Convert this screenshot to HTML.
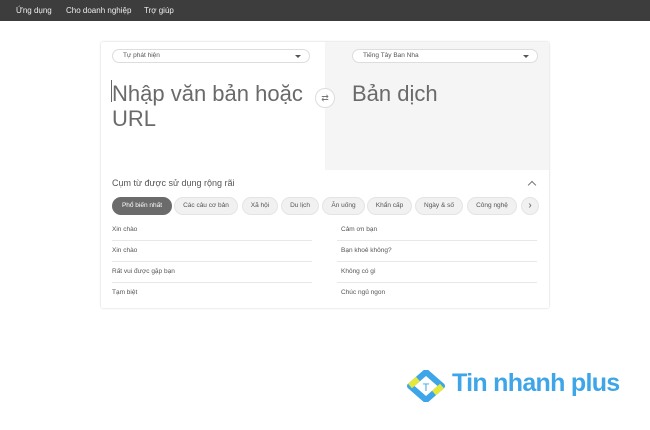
<html><head><style>
body{margin:0;width:650px;height:430px;background:#fff;font-family:"Liberation Sans",sans-serif;position:relative;overflow:hidden}
.nav{position:absolute;left:0;top:0;width:650px;height:21px;background:#3d3d3d;color:#eee;font-size:8px}
.nav span{position:absolute;top:6px}
.card{position:absolute;left:101px;top:42px;width:448px;height:266px;background:#fff;box-shadow:0 0 2px rgba(0,0,0,.2);border-radius:2px}
.right{position:absolute;left:224px;top:0;width:224px;height:128px;background:#f5f5f5}
.sel{position:absolute;top:7px;height:12px;border:1px solid #ddd;border-radius:8px;background:#fff;font-size:6.5px;color:#555;line-height:12px;padding-left:10px;box-sizing:content-box}
.sel:after{content:"";position:absolute;right:8px;top:5px;border:3px solid transparent;border-top:3px solid #555}
.big{position:absolute;font-size:22px;color:#6a6a6a;line-height:25px}
.sw{position:absolute;left:214px;top:46px;width:18px;height:18px;border-radius:50%;background:#fff;border:1px solid #ddd;font-size:9px;color:#777;text-align:center;line-height:18px}
.chip{position:absolute;top:155px;height:16px;border:1px solid #e4e4e4;border-radius:9px;background:#f1f1f1;font-size:6.5px;color:#555;line-height:16px;text-align:center}
.it{position:absolute;font-size:6.5px;color:#555}
.ln{position:absolute;height:1px;background:#e8e8e8}
</style></head><body>
<div class="nav"><span style="left:16px">Ứng dụng</span><span style="left:66px">Cho doanh nghiệp</span><span style="left:144px">Trợ giúp</span></div>
<div class="card">
<div class="right"></div>
<div class="sel" style="left:11px;width:186px">Tự phát hiện</div>
<div class="sel" style="left:251px;width:174px">Tiếng Tây Ban Nha</div>
<div style="position:absolute;left:10px;top:38px;width:1px;height:22px;background:#666"></div>
<div class="big" style="left:11px;top:39px">Nhập văn bản hoặc<br>URL</div>
<div class="big" style="left:251px;top:39px">Bản dịch</div>
<div class="sw">⇄</div>
<div style="position:absolute;left:11px;top:136px;font-size:9px;color:#555">Cụm từ được sử dụng rộng rãi</div>
<div style="position:absolute;left:428px;top:140px;width:5px;height:5px;border-left:1px solid #777;border-top:1px solid #777;transform:rotate(45deg)"></div>
<div class="chip" style="left:11px;width:58px;background:#6b6b6b;color:#fff;border-color:#6b6b6b">Phổ biến nhất</div>
<div class="chip" style="left:73px;width:62px">Các câu cơ bản</div>
<div class="chip" style="left:141px;width:34px">Xã hội</div>
<div class="chip" style="left:180px;width:36px">Du lịch</div>
<div class="chip" style="left:221px;width:41px">Ăn uống</div>
<div class="chip" style="left:266px;width:43px">Khẩn cấp</div>
<div class="chip" style="left:314px;width:46px">Ngày &amp; số</div>
<div class="chip" style="left:366px;width:48px">Công nghệ</div>
<div class="chip" style="left:420px;width:16px;font-size:10px">›</div>
<div class="it" style="left:11px;top:184px">Xin chào</div><div class="it" style="left:240px;top:184px">Cảm ơn bạn</div>
<div class="it" style="left:11px;top:205px">Xin chào</div><div class="it" style="left:240px;top:205px">Bạn khoẻ không?</div>
<div class="it" style="left:11px;top:226px">Rất vui được gặp bạn</div><div class="it" style="left:240px;top:226px">Không có gì</div>
<div class="it" style="left:11px;top:247px">Tạm biệt</div><div class="it" style="left:240px;top:247px">Chúc ngủ ngon</div>
<div class="ln" style="left:11px;top:198px;width:200px"></div><div class="ln" style="left:236px;top:198px;width:200px"></div>
<div class="ln" style="left:11px;top:219px;width:200px"></div><div class="ln" style="left:236px;top:219px;width:200px"></div>
<div class="ln" style="left:11px;top:240px;width:200px"></div><div class="ln" style="left:236px;top:240px;width:200px"></div>
</div>
<svg style="position:absolute;left:406px;top:370px" width="40" height="32" viewBox="0 0 40 32">
<path d="M20 2 L36 16 L20 30 L4 16 Z" fill="none" stroke="#3da5e8" stroke-width="6" stroke-linejoin="round"/>
<path d="M4 16 L12 9 M28 23 L36 16" stroke="#e3e83a" stroke-width="6"/>
<text x="20" y="21" font-size="11" fill="#3da5e8" text-anchor="middle" font-family="Liberation Sans">T</text>
</svg>
<div style="position:absolute;left:452px;top:369px;font-size:25px;font-weight:bold;color:#3da5e8;letter-spacing:-0.7px">Tin nhanh plus</div>
</body></html>
